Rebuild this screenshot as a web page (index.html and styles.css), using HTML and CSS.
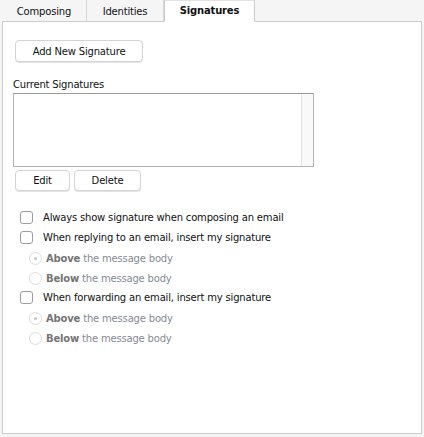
FILE: index.html
```html
<!DOCTYPE html>
<html>
<head>
<meta charset="utf-8">
<link rel="stylesheet" href="styles.css">
</head>
<body>
<div class="tabs">
  <div class="tab tab-composing">Composing</div>
  <div class="tab tab-identities">Identities</div>
  <div class="tab tab-active">Signatures</div>
  <div class="tab-fill"></div>
</div>
<div class="panel">
  <button class="btn btn-add">Add New Signature</button>
  <div class="label">Current Signatures</div>
  <div class="listbox"><div class="scrolltrack"></div></div>
  <div class="btn-row">
    <button class="btn btn-edit">Edit</button>
    <button class="btn btn-delete">Delete</button>
  </div>
  <div class="options">
    <div class="row check-row"><span class="checkbox"></span><span>Always show signature when composing an email</span></div>
    <div class="row check-row"><span class="checkbox"></span><span>When replying to an email, insert my signature</span></div>
    <div class="row radio-row first-radio"><span class="radio checked"></span><span class="rtext"><b>Above</b> the message body</span></div>
    <div class="row radio-row"><span class="radio"></span><span class="rtext"><b>Below</b> the message body</span></div>
    <div class="row check-row after-radio"><span class="checkbox"></span><span>When forwarding an email, insert my signature</span></div>
    <div class="row radio-row first-radio"><span class="radio checked"></span><span class="rtext"><b>Above</b> the message body</span></div>
    <div class="row radio-row"><span class="radio"></span><span class="rtext"><b>Below</b> the message body</span></div>
  </div>
</div>
</body>
</html>
```
FILE: styles.css
```css
html, body {
  margin: 0;
  padding: 0;
  background: #f5f5f5;
  width: 424px;
  height: 437px;
  overflow: hidden;
  font-family: "DejaVu Sans", Verdana, sans-serif;
  font-size: 10px;
  letter-spacing: -0.18px;
  color: #111;
}
.tabs {
  display: flex;
  height: 21px;
  margin-left: 2px;
  margin-right: 2px;
}
.tab {
  box-sizing: border-box;
  height: 22px;
  line-height: 23px;
  text-align: center;
  border-bottom: 1px solid #cccccc;
  border-right: 1px solid #d6d6d6;
}
.tab-composing { width: 85px; }
.tab-identities { width: 77px; }
.tab-active {
  width: 91px;
  background: #fff;
  font-weight: bold;
  border-left: 1px solid #cccccc;
  border-right: 1px solid #cccccc;
  border-bottom: 1px solid #fff;
  border-top: 1px solid #e2e2e2;
  line-height: 20px;
  position: relative;
  z-index: 1;
}
.tab-fill {
  flex: 1;
  height: 22px;
  box-sizing: border-box;
  border-bottom: 1px solid #cccccc;
}
.panel {
  box-sizing: border-box;
  margin: 0 2px;
  height: 413px;
  background: #fff;
  border: 1px solid #cccccc;
  display: flex;
  flex-direction: column;
  align-items: flex-start;
  padding: 18px 0 0 10px;
}
.btn {
  font-family: inherit;
  font-size: 10px;
  letter-spacing: -0.18px;
  color: #111;
  background: #fff;
  border: 1px solid #d4d4d4;
  border-radius: 4px;
  box-shadow: 0 1px 0 #e4e4e4;
  padding: 0;
  box-sizing: border-box;
}
.btn-add {
  margin-left: 2px;
  width: 128px;
  height: 22px;
}
.label {
  margin-top: 17px;
  line-height: 12px;
}
.listbox {
  margin-top: 2px;
  width: 301px;
  height: 74px;
  box-sizing: border-box;
  border: 1px solid #b2b2b2;
  border-top-color: #9a9a9a;
  display: flex;
  justify-content: flex-end;
}
.scrolltrack {
  width: 11px;
  height: 100%;
  background: #f9f9f9;
  border-left: 1px solid #e4e4e4;
}
.btn-row {
  display: flex;
  gap: 4px;
  margin-top: 3px;
  margin-left: 2px;
}
.btn-edit { width: 55px; height: 21px; }
.btn-delete { width: 67px; height: 21px; }
.options {
  margin-top: 16px;
  margin-left: 7px;
  display: flex;
  flex-direction: column;
}
.row {
  display: flex;
  align-items: center;
  height: 20px;
}
.checkbox {
  width: 11px;
  height: 11px;
  border: 1px solid #9d9d9d;
  border-radius: 3px;
  margin-right: 10px;
  background: #fff;
}
.radio-row { padding-left: 9px; }
.first-radio { margin-top: 1px; }
.after-radio { margin-top: -1px; }
.radio {
  width: 11px;
  height: 11px;
  border: 1px solid #dcdcdc;
  border-radius: 50%;
  margin-right: 4px;
  position: relative;
}
.radio.checked::after {
  content: "";
  position: absolute;
  left: 4px;
  top: 4px;
  width: 3px;
  height: 3px;
  border-radius: 50%;
  background: #c4c4c4;
}
.rtext { color: #858a94; }
.rtext b { color: #747474; }
```
